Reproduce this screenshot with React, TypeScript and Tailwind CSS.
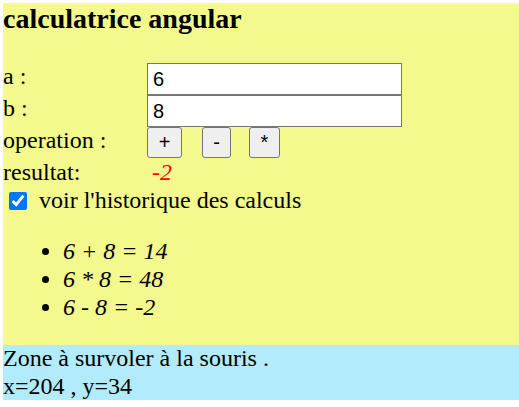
import { useState } from 'react';

const history = ['6 + 8 = 14', '6 * 8 = 48', '6 - 8 = -2'];

export default function App() {
  const [showHistory, setShowHistory] = useState(true);

  return (
    <div className="pl-[3px] pt-[3px] font-['Liberation_Serif',serif] text-[24px] leading-[1.15] text-black">
      <div className="bg-[#f3f98c]">
        <h3 className="text-[28px] font-bold mb-[28px]">calculatrice angular</h3>

        <div className="grid grid-cols-[144px_1fr]">
          <div className="h-[32px]">a :</div>
          <div>
            <input
              defaultValue="6"
              className="w-[255px] h-[32px] border border-[#767676] bg-white pl-[5px] font-['Liberation_Sans',sans-serif] text-[20px] outline-none"
            />
          </div>
          <div className="h-[32px]">b :</div>
          <div>
            <input
              defaultValue="8"
              className="w-[255px] h-[32px] border border-[#767676] bg-white pl-[5px] font-['Liberation_Sans',sans-serif] text-[20px] outline-none"
            />
          </div>
          <div className="h-[32px]">operation :</div>
          <div className="flex items-start font-['Liberation_Sans',sans-serif] text-[20px]">
            <button className="w-[35px] h-[31px] border border-[#767676] rounded-[3px] bg-[#efefef]">+</button>
            <button className="ml-[20px] w-[29px] h-[31px] border border-[#767676] rounded-[3px] bg-[#efefef]">-</button>
            <button className="ml-[18px] w-[31px] h-[31px] border border-[#767676] rounded-[3px] bg-[#efefef]">*</button>
          </div>
          <div>resultat:</div>
          <div className="pl-[5px] italic text-[#ff0000]">-2</div>
        </div>

        <label className="flex items-center">
          <input
            type="checkbox"
            checked={showHistory}
            onChange={(e) => setShowHistory(e.target.checked)}
            className="ml-[6px] mr-[12px] w-[18px] h-[18px] accent-[#0075ff]"
          />
          voir l'historique des calculs
        </label>

        {showHistory && (
          <ul className="list-disc pl-[60px] py-[24px] italic">
            {history.map((h) => (
              <li key={h}>{h}</li>
            ))}
          </ul>
        )}
      </div>

      <div className="bg-[#b2ebfb]">
        <div>Zone à survoler à la souris .</div>
        <div>x=204 , y=34</div>
      </div>
    </div>
  );
}
